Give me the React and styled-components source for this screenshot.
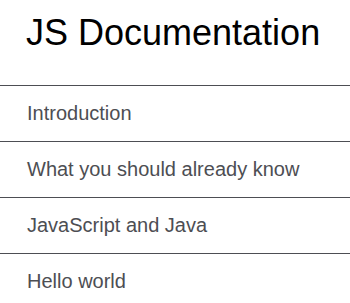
import React from "react";
import styled, { createGlobalStyle } from "styled-components";

const Global = createGlobalStyle`
  html, body { margin: 0; padding: 0; background: #fff; }
  body { font-family: "Liberation Sans", Arial, sans-serif; }
`;

const Nav = styled.nav`
  width: 350px;
  display: flex;
  flex-direction: column;
`;

const Header = styled.header`
  padding: 12px 27px 32px 26px;
`;

const Title = styled.h1`
  margin: 0;
  font-size: 36px;
  font-weight: 400;
  line-height: 41px;
  color: #000;
`;

const List = styled.ul`
  list-style: none;
  margin: 0;
  padding: 0;
`;

const Item = styled.li`
  border-top: 1px solid #4d4e53;
`;

const Link = styled.a`
  display: block;
  padding: 16px 27px;
  font-size: 20px;
  line-height: 23px;
  color: #4d4e53;
  text-decoration: none;
`;

const items = [
  "Introduction",
  "What you should already know",
  "JavaScript and Java",
  "Hello world",
];

export default function App() {
  return (
    <>
      <Global />
      <Nav>
        <Header>
          <Title>JS Documentation</Title>
        </Header>
        <List>
          {items.map((t) => (
            <Item key={t}>
              <Link href="#">{t}</Link>
            </Item>
          ))}
        </List>
      </Nav>
    </>
  );
}
